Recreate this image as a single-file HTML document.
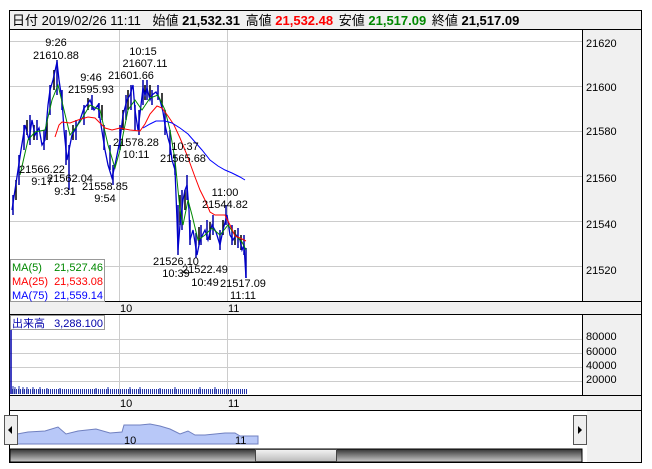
<!DOCTYPE html>
<html><head><meta charset="utf-8"><style>
body{margin:0;width:652px;height:469px;background:#fff;position:relative;overflow:hidden;font-family:"Liberation Sans","Noto Sans CJK JP",sans-serif;}
.a{position:absolute;}
svg text{font-family:"Liberation Sans","Noto Sans CJK JP",sans-serif;font-size:11px;}
</style></head><body>
<svg class="a" style="left:0;top:0" width="652" height="469" viewBox="0 0 652 469">
<defs>
<linearGradient id="g" x1="0" y1="0" x2="0" y2="1"><stop offset="0" stop-color="#333"/><stop offset="1" stop-color="#ccc"/></linearGradient>
<linearGradient id="h" x1="0" y1="0" x2="0" y2="1"><stop offset="0" stop-color="#f4f4f4"/><stop offset="1" stop-color="#bbb"/></linearGradient>
<pattern id="vp" x="12" y="0" width="2" height="10" patternUnits="userSpaceOnUse"><rect x="0" y="0" width="1" height="10" fill="#2233aa"/></pattern>
</defs>
<rect x="9.5" y="10.5" width="632" height="452" fill="#fff" stroke="#000"/>
<rect x="10" y="11" width="631" height="18" fill="#f0f0f0"/>
<line x1="10" y1="29.5" x2="641" y2="29.5" stroke="#000"/>
<text x="12" y="25" style="font-size:13px">日付 2019/02/26 11:11 <tspan dx="8">始値</tspan> <tspan font-weight="bold">21,532.31</tspan> <tspan dx="2">高値</tspan> <tspan fill="#f00" font-weight="bold">21,532.48</tspan> <tspan dx="2">安値</tspan> <tspan fill="#080" font-weight="bold">21,517.09</tspan> <tspan dx="2">終値</tspan> <tspan font-weight="bold">21,517.09</tspan></text>
<rect x="583" y="30" width="58" height="271" fill="#f0f0f0"/>
<rect x="583" y="315" width="58" height="80" fill="#f0f0f0"/>
<rect x="587" y="411" width="54" height="51" fill="#f0f0f0"/>
<line x1="582.5" y1="30" x2="582.5" y2="395" stroke="#000"/>
<g fill="#000"><text x="586" y="47">21620</text><text x="586" y="91">21600</text><text x="586" y="135">21580</text><text x="586" y="182">21560</text><text x="586" y="228">21540</text><text x="586" y="274">21520</text>
<text x="586" y="340">80000</text><text x="586" y="355">60000</text><text x="586" y="369">40000</text><text x="586" y="383">20000</text></g>
<g stroke="#ccc"><line x1="10" y1="41.5" x2="582" y2="41.5"/><line x1="10" y1="86.5" x2="582" y2="86.5"/><line x1="10" y1="131.5" x2="582" y2="131.5"/><line x1="10" y1="176.5" x2="582" y2="176.5"/><line x1="10" y1="221.5" x2="582" y2="221.5"/><line x1="10" y1="266.5" x2="582" y2="266.5"/>
<line x1="119.5" y1="30" x2="119.5" y2="301"/><line x1="227.5" y1="30" x2="227.5" y2="301"/>
<line x1="10" y1="339.5" x2="582" y2="339.5"/><line x1="10" y1="353.5" x2="582" y2="353.5"/><line x1="10" y1="367.5" x2="582" y2="367.5"/><line x1="10" y1="381.5" x2="582" y2="381.5"/>
<line x1="119.5" y1="315" x2="119.5" y2="395"/><line x1="227.5" y1="315" x2="227.5" y2="395"/></g>
<rect x="10" y="301" width="631" height="13" fill="#f0f0f0"/>
<line x1="10" y1="301.5" x2="641" y2="301.5" stroke="#000"/><line x1="10" y1="314.5" x2="641" y2="314.5" stroke="#000"/>
<text x="120" y="312">10</text><text x="228" y="312">11</text>
<rect x="10" y="395" width="631" height="15" fill="#f0f0f0"/>
<line x1="10" y1="395.5" x2="641" y2="395.5" stroke="#000"/><line x1="10" y1="410.5" x2="641" y2="410.5" stroke="#000"/>
<text x="120" y="407">10</text><text x="228" y="407">11</text>
<!-- candle spikes -->
<g stroke="#00a" stroke-width="1.5">
<path d="M13 215v-20M19 185v-30M24 150v-25M30 145v-30M37 140v-20M44 150v-20M50 115v-30M57 95v-35M62 110v-20M66 165v-35M69 190v-45M76 140v-20M84 125v-20M92 110v-15M99 118v-15M104 150v-25M110 170v-25M113 185v-20M120 150v-25M126 120v-25M131 110v-25M135 130v-25M139 135v-25M143 105v-25M147 100v-20M152 105v-15M158 100v-15M165 135v-25M170 155v-25M175 175v-20M178 255v-50M182 230v-40M187 200v-25M190 245v-25M196 258v-25M201 245v-20M207 240v-20M213 235v-20M220 250v-20M226 225v-20M232 245v-20M238 248v-20M244 255v-20M246 278v-30"/>
</g>
<g stroke="#000" stroke-width="1.5">
<path d="M16 200v-20M27 135v-15M34 140v-15M47 140v-20M54 90v-20M73 140v-15M88 110v-12M102 120v-15M123 130v-20M128 110v-20M145 100v-15M150 97v-12M162 108v-15M180 225v-30M185 210v-20M199 245v-18M210 240v-18M223 235v-15M235 245v-15M241 250v-15"/>
</g>
<polyline fill="none" stroke="#00c" stroke-width="1.3" points="12,210 15,190 18,170 21,150 25,125 29,140 32,120 35,135 39,128 42,145 45,140 48,105 50,90 53,80 57,62 59,80 62,100 64,130 67,160 69,150 72,135 76,128 80,120 84,108 87,105 90,100 94,110 98,105 101,125 105,150 108,165 112,178 115,165 118,150 120,140 123,115 127,100 130,95 133,85 135,110 138,130 141,105 143,88 145,95 147,88 150,100 152,95 156,92 160,100 163,112 165,125 168,138 170,145 172,160 175,170 177,220 178,250 180,225 183,200 185,190 187,185 189,210 190,240 193,230 197,255 200,240 205,230 208,240 212,225 216,232 220,245 223,230 227,215 230,235 233,240 236,235 240,240 242,250 244,245 246,278"/>
<polyline fill="none" stroke="#080" points="20,175 28,140 35,132 45,130 52,100 58,85 64,110 70,135 80,122 90,105 100,110 108,145 115,168 120,150 128,110 135,100 142,110 150,98 158,95 165,110 170,130 175,160 180,210 183,225 188,200 192,215 198,240 205,235 212,228 220,235 228,225 235,235 242,242 246,250"/>
<polyline fill="none" stroke="#f00" points="55,137 59,125 62,122 70,123 78,120 88,117 95,118 100,123 105,128 112,130 120,128 130,130 140,131 145,124 150,114 157,106 162,108 168,116 174,125 180,138 187,155 195,177 200,190 205,200 210,212 215,215 225,215 230,225 235,236 240,238 246,241"/>
<polyline fill="none" stroke="#00f" points="143,128 150,124 156,121 165,121 172,123 180,128 188,134 195,142 202,150 210,160 218,166 225,170 232,173 240,177 245,180"/>
<g fill="#000" text-anchor="middle">
<text x="56" y="46">9:26</text><text x="56" y="59">21610.88</text>
<text x="143" y="55">10:15</text><text x="145" y="67">21607.11</text><text x="131" y="79">21601.66</text>
<text x="91" y="81">9:46</text><text x="91" y="93">21595.93</text>
<text x="136" y="146">21578.28</text><text x="136" y="158">10:11</text>
<text x="185" y="150">10:37</text><text x="183" y="162">21565.68</text>
<text x="42" y="173">21566.22</text><text x="42" y="185">9:17</text>
<text x="70" y="182">21562.04</text><text x="65" y="195">9:31</text>
<text x="105" y="190">21558.85</text><text x="105" y="202">9:54</text>
<text x="225" y="196">11:00</text><text x="225" y="208">21544.82</text>
<text x="176" y="265">21526.10</text><text x="176" y="277">10:39</text>
<text x="205" y="273">21522.49</text><text x="205" y="286">10:49</text>
<text x="243" y="287">21517.09</text><text x="243" y="299">11:11</text>
</g>
<rect x="10.5" y="259.5" width="94" height="42" fill="#fff" stroke="#999"/>
<text x="12" y="271" fill="#080">MA(5)</text><text x="103" y="271" fill="#080" text-anchor="end">21,527.46</text>
<text x="12" y="285" fill="#f00">MA(25)</text><text x="103" y="285" fill="#f00" text-anchor="end">21,533.08</text>
<text x="12" y="299" fill="#00f">MA(75)</text><text x="103" y="299" fill="#00f" text-anchor="end">21,559.14</text>
<rect x="10.5" y="315.5" width="94" height="14" fill="#fff" stroke="#999"/>
<text x="12" y="327" fill="#00a">出来高</text><text x="103" y="327" fill="#00a" text-anchor="end">3,288.100</text>
<line x1="11" y1="330" x2="11" y2="394" stroke="#00a" stroke-width="1.5"/>
<rect x="12" y="389" width="235" height="5" fill="url(#vp)"/>
<path d="M13 386v8M15 387v7M19 386v8M23 387v7M27 387v7M33 387v7M40 387v7M47 388v6M60 388v6M96 388v6M108 387v7M130 387v7M140 387v7M160 388v6M175 387v7M200 387v7M215 387v7" stroke="#2233aa"/>
<path d="M17 444 L17 434 L28 432 L45 431 L58 427 L66 434 L78 431 L96 429 L110 433 L122 432 L124 425 L140 425 L150 424 L160 426 L170 429 L180 434 L188 431 L195 435 L205 435 L215 434 L225 433 L235 433 L240 436 L252 436 L258 436 L258 444Z" fill="#b8c8f8" stroke="#7080c0"/>
<text x="124" y="444">10</text><text x="235" y="444">11</text>
<rect x="4.5" y="415.5" width="13" height="29" fill="#eee" stroke="#555"/><path d="M12 426 L8 430 L12 434Z" fill="#000"/>
<rect x="573.5" y="415.5" width="13" height="29" fill="#eee" stroke="#555"/><path d="M578 426 L582 430 L578 434Z" fill="#000"/>
<rect x="10" y="449" width="572" height="13" fill="url(#g)" stroke="#000"/>
<rect x="255.5" y="449.5" width="81" height="12" fill="url(#h)" stroke="#444"/>
</svg>
</body></html>
